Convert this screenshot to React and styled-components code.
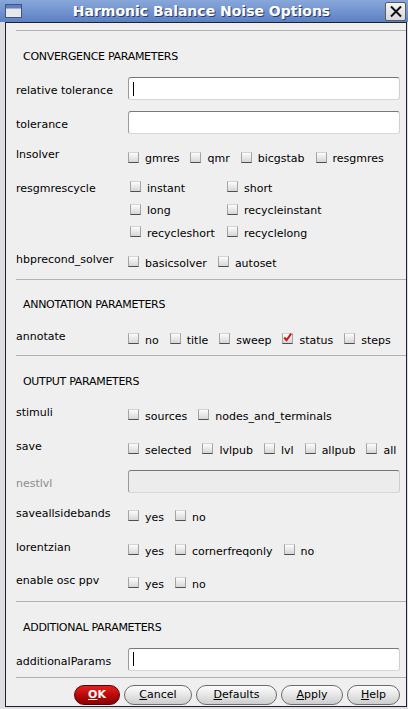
import React from "react";
import styled, { createGlobalStyle } from "styled-components";

const GlobalStyle = createGlobalStyle`
  html, body { margin: 0; padding: 0; }
  body {
    background: #e2e2e2;
    font-family: "DejaVu Sans", Verdana, sans-serif;
    font-size: 11px;
    color: #000;
  }
`;

const Window = styled.div`
  width: 408px;
  height: 709px;
  display: flex;
  flex-direction: column;
  overflow: hidden;
  background: #dedede;
`;

const TitleBar = styled.div`
  height: 22px;
  flex: none;
  display: flex;
  align-items: center;
  padding: 0 2px 0 5px;
  background: linear-gradient(#88a7da, #5d80c3);
`;

const Title = styled.div`
  flex: 1;
  text-align: center;
  font-family: "DejaVu Sans", sans-serif;
  font-weight: bold;
  font-size: 14px;
  color: #fff;
  text-shadow: 1px 1px 0 #2b3d66;
  padding-right: 4px;
`;

const CloseBox = styled.div`
  width: 19px;
  height: 17px;
  border: 1px solid #5c5c5c;
  border-radius: 2px;
  background: linear-gradient(#f4f4f4, #d8d8d8);
  display: flex;
  align-items: center;
  justify-content: center;
`;

const Frame = styled.div`
  flex: 1;
  display: flex;
  padding: 0 1px 2px 5px;
`;

const Panel = styled.div`
  flex: 1;
  display: flex;
  flex-direction: column;
  border: 1px solid #1c2133;
  background: #efefef;
  padding: 0 6px 0 10px;
`;

const Separator = styled.div`
  height: 1px;
  flex: none;
  background: #b2b2b2;
  margin: ${(p) => p.$top}px -6px 0 0;
`;

const Heading = styled.div`
  height: 13px;
  line-height: 13px;
  margin-top: ${(p) => p.$top}px;
  padding-left: 7px;
  font-size: 11px;
  letter-spacing: -0.3px;
`;

const Row = styled.div`
  display: grid;
  grid-template-columns: 112px 1fr;
  align-items: ${(p) => (p.$start ? "start" : "center")};
  min-height: 23px;
  margin-top: ${(p) => p.$top}px;
`;

const Label = styled.div`
  line-height: 13px;
  white-space: nowrap;
  color: ${(p) => (p.$disabled ? "#8c8c8c" : "#000")};
  padding-top: ${(p) => (p.$input ? 4 : p.$pad || 0)}px;
  padding-bottom: ${(p) => (p.$input || p.$pad ? 0 : 6)}px;
`;

const Field = styled.div`
  height: 23px;
  box-sizing: border-box;
  border: 1px solid;
  border-color: #777 #cfcfcf #d6d6d6 #9a9a9a;
  border-radius: 3px;
  background: ${(p) => (p.$disabled ? "#ececec" : "#fff")};
  display: flex;
  align-items: center;
  padding-left: 4px;
`;

const Caret = styled.span`
  width: 1px;
  height: 14px;
  background: #000;
`;

const Options = styled.div`
  display: flex;
  align-items: center;
  gap: 11px;
  height: 23px;
`;

const OptionGrid = styled.div`
  display: grid;
  grid-template-columns: 97px 97px;
  grid-auto-rows: 22.5px;
  align-items: center;
  padding-left: 2px;
`;

const Option = styled.label`
  display: flex;
  align-items: center;
  gap: 6px;
  white-space: nowrap;
  padding-top: 2px;
`;

const Box = styled.span`
  width: 11px;
  height: 11px;
  box-sizing: border-box;
  flex: none;
  border: 1px solid;
  border-color: #d4d4d4 #a4a4a4 #4e4e4e #a4a4a4;
  background: linear-gradient(#fcfcfc, #d6d6d6);
  display: flex;
  align-items: center;
  justify-content: center;
  margin-top: -3px;
`;

const ButtonBar = styled.div`
  display: flex;
  justify-content: flex-end;
  gap: 4px;
  margin-top: 7px;
`;

const Button = styled.div`
  height: 20px;
  width: ${(p) => p.$w}px;
  box-sizing: border-box;
  border: 1px solid ${(p) => (p.$primary ? "#5a0000" : "#6c6c6c")};
  border-radius: 10px;
  background: ${(p) =>
    p.$primary
      ? "linear-gradient(#e62020, #b00606 60%, #8c0000)"
      : "linear-gradient(#fdfdfd, #e6e6e6 50%, #cdcdcd)"};
  color: ${(p) => (p.$primary ? "#fff" : "#000")};
  font-weight: ${(p) => (p.$primary ? "bold" : "normal")};
  font-size: 11px;
  display: flex;
  align-items: center;
  justify-content: center;
`;

function Check({ label, checked }) {
  return (
    <Option>
      <Box>
        {checked && (
          <svg width="11" height="11" viewBox="0 0 11 11" style={{ marginTop: -3 }}>
            <path d="M1.5 5.5 L4.3 8.8 L10 0.8" fill="none" stroke="#d41010" strokeWidth="2.4" />
          </svg>
        )}
      </Box>
      {label}
    </Option>
  );
}

function CheckRow({ label, items, top, checked }) {
  return (
    <Row $top={top}>
      <Label>{label}</Label>
      <Options>
        {items.map((it) => (
          <Check key={it} label={it} checked={it === checked} />
        ))}
      </Options>
    </Row>
  );
}

function InputRow({ label, top, caret, disabled }) {
  return (
    <Row $top={top}>
      <Label $input $disabled={disabled}>{label}</Label>
      <Field $disabled={disabled}>{caret && <Caret />}</Field>
    </Row>
  );
}

export default function App() {
  return (
    <Window>
      <GlobalStyle />
      <TitleBar>
        <svg width="17" height="14" viewBox="0 0 17 14">
          <rect x="0.5" y="0.5" width="16" height="13" fill="#e6e8ea" stroke="#3d5588" />
          <rect x="1" y="1" width="15" height="3" fill="#5f7fbf" />
          <rect x="1" y="4" width="15" height="1" fill="#9fb0d0" />
        </svg>
        <Title>Harmonic Balance Noise Options</Title>
        <CloseBox>
          <svg width="14" height="13" viewBox="0 0 14 13">
            <path d="M2 1.5 L12 11.5 M12 1.5 L2 11.5" stroke="#111" strokeWidth="2" />
          </svg>
        </CloseBox>
      </TitleBar>
      <Frame>
        <Panel>
          <Separator $top={7} />
          <Heading $top={19}>CONVERGENCE PARAMETERS</Heading>
          <InputRow label="relative tolerance" top={14} caret />
          <InputRow label="tolerance" top={11} />
          <CheckRow label="lnsolver" top={12} items={["gmres", "qmr", "bicgstab", "resgmres"]} />
          <Row $top={7} $start>
            <Label $pad={6}>resgmrescycle</Label>
            <OptionGrid>
              {["instant", "short", "long", "recycleinstant", "recycleshort", "recyclelong"].map((it) => (
                <Check key={it} label={it} />
              ))}
            </OptionGrid>
          </Row>
          <CheckRow label="hbprecond_solver" top={7} items={["basicsolver", "autoset"]} />
          <Separator $top={5} />
          <Heading $top={18}>ANNOTATION PARAMETERS</Heading>
          <CheckRow
            label="annotate"
            top={17}
            items={["no", "title", "sweep", "status", "steps"]}
            checked="status"
          />
          <Separator $top={4} />
          <Heading $top={19}>OUTPUT PARAMETERS</Heading>
          <CheckRow label="stimuli" top={16} items={["sources", "nodes_and_terminals"]} />
          <CheckRow label="save" top={11} items={["selected", "lvlpub", "lvl", "allpub", "all"]} />
          <InputRow label="nestlvl" top={9} disabled />
          <CheckRow label="saveallsidebands" top={12} items={["yes", "no"]} />
          <CheckRow label="lorentzian" top={11} items={["yes", "cornerfreqonly", "no"]} />
          <CheckRow label="enable osc ppv" top={10} items={["yes", "no"]} />
          <Separator $top={6} />
          <Heading $top={19}>ADDITIONAL PARAMETERS</Heading>
          <InputRow label="additionalParams" top={14} caret />
          <Separator $top={6} />
          <ButtonBar>
            <Button $primary $w={46}><u>O</u>K</Button>
            <Button $w={68}><u>C</u>ancel</Button>
            <Button $w={81}><u>D</u>efaults</Button>
            <Button $w={62}><u>A</u>pply</Button>
            <Button $w={53}><u>H</u>elp</Button>
          </ButtonBar>
        </Panel>
      </Frame>
    </Window>
  );
}
